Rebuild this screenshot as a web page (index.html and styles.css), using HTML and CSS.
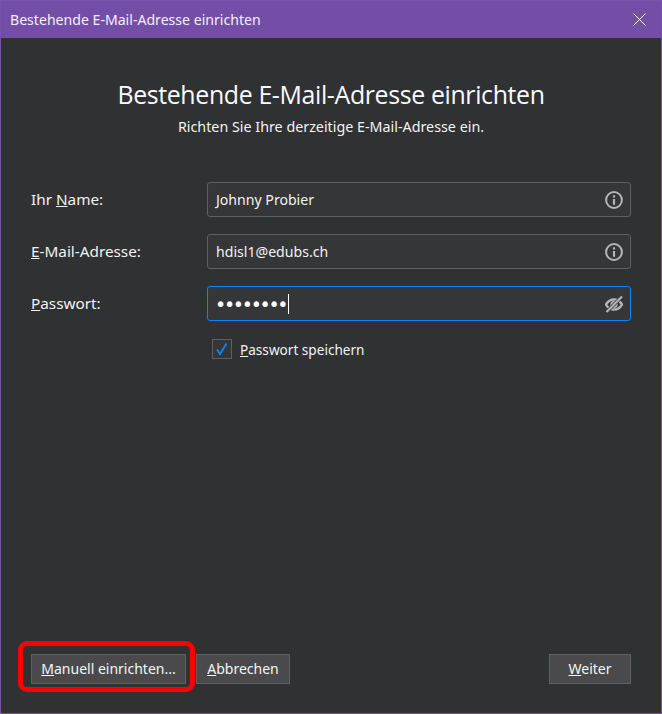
FILE: index.html
```html
<!DOCTYPE html>
<html lang="de">
<head>
<meta charset="utf-8">
<title>Bestehende E-Mail-Adresse einrichten</title>
<link rel="stylesheet" href="styles.css">
</head>
<body>
<div class="window">
  <header class="titlebar">
    <span class="titlebar-text">Bestehende E-Mail-Adresse einrichten</span>
    <svg class="close" width="13" height="13" viewBox="0 0 13 13"><path d="M.5.5l12 12M12.5.5l-12 12" stroke="#fff" stroke-width="1" fill="none"/></svg>
  </header>
  <main class="content">
    <h1 class="heading">Bestehende E-Mail-Adresse einrichten</h1>
    <p class="subheading">Richten Sie Ihre derzeitige E-Mail-Adresse ein.</p>
    <form class="form">
      <div class="row">
        <label class="label">Ihr <u>N</u>ame:</label>
        <div class="field"><span class="value">Johnny Probier</span>
          <svg class="icon" width="18" height="18" viewBox="0 0 18 18"><circle cx="9" cy="9" r="7.9" fill="none" stroke="#b4b4b4" stroke-width="2"/><rect x="7.900" y="8" width="2.200" height="5.800" fill="#b4b4b4"/><rect x="7.900" y="4.300" width="2.200" height="2.200" fill="#b4b4b4"/></svg>
        </div>
      </div>
      <div class="row">
        <label class="label"><u>E</u>-Mail-Adresse:</label>
        <div class="field"><span class="value">hdisl1@edubs.ch</span>
          <svg class="icon" width="18" height="18" viewBox="0 0 18 18"><circle cx="9" cy="9" r="7.9" fill="none" stroke="#b4b4b4" stroke-width="2"/><rect x="7.900" y="8" width="2.200" height="5.800" fill="#b4b4b4"/><rect x="7.900" y="4.300" width="2.200" height="2.200" fill="#b4b4b4"/></svg>
        </div>
      </div>
      <div class="row">
        <label class="label"><u>P</u>asswort:</label>
        <div class="field field-focus"><span class="value dots">••••••••</span><span class="caret"></span>
          <svg class="icon" width="18" height="18" viewBox="0 0 18 18"><path d="M1 9.500C3 6.200 5.700 4.500 9 4.500s6 1.700 8 5c-2 3.300-4.700 5-8 5s-6-1.700-8-5z" fill="none" stroke="#b4b4b4" stroke-width="2.400"/><circle cx="9" cy="9.500" r="3.600" fill="#b4b4b4"/><path d="M17 1.500L1.500 17" stroke="#353638" stroke-width="3.600"/><path d="M17 1.500L1.500 17" stroke="#b4b4b4" stroke-width="2.200"/></svg>
        </div>
      </div>
      <div class="check-row">
        <span class="checkbox"><svg width="14" height="14" viewBox="0 0 14 14"><path d="M2 7.500L5 12L11.500 1.500" fill="none" stroke="#0a84ff" stroke-width="1.800"/></svg></span>
        <span class="check-label"><u>P</u>asswort speichern</span>
      </div>
    </form>
    <div class="spacer"></div>
    <footer class="buttons">
      <div class="btn-group">
        <button type="button" class="btn btn-manual"><u>M</u>anuell einrichten...</button>
        <button type="button" class="btn btn-cancel"><u>A</u>bbrechen</button>
      </div>
      <button type="button" class="btn btn-next"><u>W</u>eiter</button>
    </footer>
  </main>
  <div class="highlight"></div>
</div>
</body>
</html>
```
FILE: styles.css
```css
* { box-sizing: border-box; }
html, body { margin: 0; padding: 0; }
body { width: 662px; height: 714px; background: #2f3133; font-family: "Noto Sans", "Open Sans", sans-serif; color: #fbfbfe; overflow: hidden; }
.window { position: relative; width: 662px; height: 714px; display: flex; flex-direction: column; border: 1px solid #7a52ab; background: #2f3133; }
.titlebar { height: 37px; flex: none; background: #744ea6; display: flex; align-items: center; justify-content: space-between; padding: 0 15px 0 9px; }
.titlebar-text { font-size: 14.100px; color: #f3eef8; }
.close { display: block; }
.content { flex: 1; display: flex; flex-direction: column; padding: 0 30px 29px 30px; min-height: 0; }
.heading { margin: 39px 0 0; font-size: 24.900px; font-weight: 400; line-height: 34px; letter-spacing: -.36px; text-align: center; color: #fbfbfe; font-family: "Open Sans", "Noto Sans", sans-serif; }
.subheading { margin: 6px 0 0; font-size: 14.300px; line-height: 20px; text-align: center; color: #f2f2f4; }
.form { margin-top: 45px; display: flex; flex-direction: column; gap: 17px; }
.row { display: flex; align-items: center; height: 35px; }
.label { width: 176px; margin-bottom: 2px; font-size: 15.300px; color: #f2f2f4; flex: none; }
.field { position: relative; flex: 1; height: 35px; display: flex; align-items: center; padding: 0 7px 0 8px; background: #353638; border: 1px solid #5e5f61; border-radius: 3px; }
.field-focus { border-color: #0a84ff; }
.value { font-size: 14.100px; color: #f2f2f4; }
.dots { margin-left: -1px; color: #fff; font-family: "DejaVu Sans", sans-serif; font-size: 19px; letter-spacing: -2.300px; line-height: 20px; }
.caret { width: 1px; height: 20px; margin-left: 2px; background: #fff; }
.icon { margin-left: auto; flex: none; display: block; }
.check-row { display: flex; align-items: center; margin: 0 0 0 181px; gap: 8px; height: 22px; }
.checkbox { width: 20px; height: 20px; border: 1px solid #5e5f61; background: #353638; display: flex; align-items: center; justify-content: center; flex: none; }
.check-label { font-size: 13.600px; color: #f2f2f4; }
.spacer { flex: 1; }
.buttons { display: flex; justify-content: space-between; align-items: center; }
.btn-group { display: flex; gap: 10px; }
.btn { height: 30px; padding: 0; background: #4a4a4d; border: 1px solid #5f6062; color: #f4f4f6; font-family: inherit; font-size: 14px; line-height: 1; }
.btn-manual { width: 155px; }
.btn-cancel { width: 94px; }
.btn-next { width: 82px; }
.highlight { position: absolute; left: 17px; top: 640px; width: 177px; height: 51px; border: 5px solid #fe0000; border-radius: 9px; pointer-events: none; }
```
